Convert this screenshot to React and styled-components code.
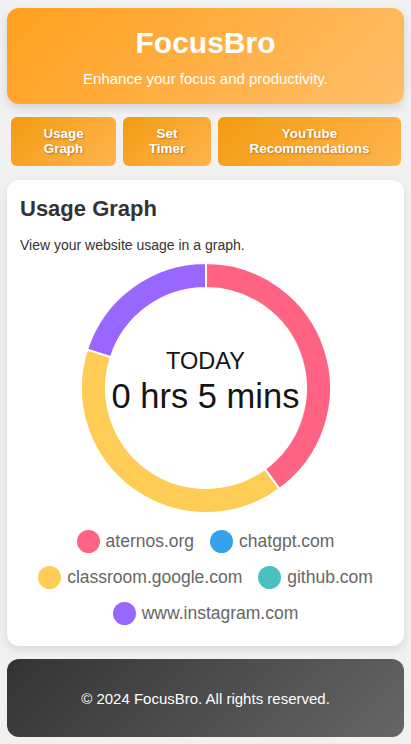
import React from "react";
import styled, { createGlobalStyle } from "styled-components";

const GlobalStyle = createGlobalStyle`
  body {
    margin: 0;
    background: #f1f1f1;
    font-family: "Liberation Sans", Arial, sans-serif;
  }
`;

const usage = [
  { site: "aternos.org", mins: 2, color: "#ff6384" },
  { site: "chatgpt.com", mins: 0, color: "#36a2eb" },
  { site: "classroom.google.com", mins: 2, color: "#ffcd56" },
  { site: "github.com", mins: 0, color: "#4bc0c0" },
  { site: "www.instagram.com", mins: 1, color: "#9966ff" },
];

const polar = (cx, cy, r, deg) => {
  const a = ((deg - 90) * Math.PI) / 180;
  return [cx + r * Math.cos(a), cy + r * Math.sin(a)];
};

const sectorPath = (cx, cy, r1, r2, start, end) => {
  const large = end - start > 180 ? 1 : 0;
  const [ox1, oy1] = polar(cx, cy, r2, start);
  const [ox2, oy2] = polar(cx, cy, r2, end);
  const [ix2, iy2] = polar(cx, cy, r1, end);
  const [ix1, iy1] = polar(cx, cy, r1, start);
  return `M${ox1} ${oy1} A${r2} ${r2} 0 ${large} 1 ${ox2} ${oy2} L${ix2} ${iy2} A${r1} ${r1} 0 ${large} 0 ${ix1} ${iy1} Z`;
};

const Donut = ({ data }) => {
  const total = data.reduce((s, d) => s + d.mins, 0);
  let angle = 0;
  return (
    <svg width="252" height="252" viewBox="0 0 252 252">
      {data
        .filter((d) => d.mins > 0)
        .map((d) => {
          const start = angle;
          angle += (d.mins / total) * 360;
          return (
            <path
              key={d.site}
              d={sectorPath(126, 126, 100, 125, start, angle)}
              fill={d.color}
              stroke="#fff"
              strokeWidth="2"
            />
          );
        })}
    </svg>
  );
};

const App = () => {
  return (
    <Page>
      <GlobalStyle />
      <Header>
        <Title>FocusBro</Title>
        <Tagline>Enhance your focus and productivity.</Tagline>
      </Header>

      <Nav>
        <NavButton>Usage<br />Graph</NavButton>
        <NavButton>Set<br />Timer</NavButton>
        <NavButton>YouTube<br />Recommendations</NavButton>
      </Nav>

      <Card>
        <CardTitle>Usage Graph</CardTitle>
        <CardText>View your website usage in a graph.</CardText>
        <ChartWrap>
          <Donut data={usage} />
          <CenterLabel>
            <Today>TODAY</Today>
            <Total>0 hrs 5 mins</Total>
          </CenterLabel>
        </ChartWrap>
        <Legend>
          {usage.map((d) => (
            <LegendItem key={d.site}>
              <Dot color={d.color} />
              {d.site}
            </LegendItem>
          ))}
        </Legend>
      </Card>

      <Footer>© 2024 FocusBro. All rights reserved.</Footer>
    </Page>
  );
};

export default App;

const Page = styled.div`
  padding: 8px 7px 6px;
  display: flex;
  flex-direction: column;
  gap: 13px;
`;

const Header = styled.header`
  background: linear-gradient(135deg, #ffa01e 0%, #ffbe69 100%);
  border-radius: 12px;
  box-shadow: 0 4px 10px rgba(0, 0, 0, 0.12);
  color: #fff;
  text-align: center;
  padding: 18px 20px 17px;
`;

const Title = styled.h1`
  margin: 0 0 10px;
  font-size: 30px;
  line-height: 34px;
  font-weight: 700;
`;

const Tagline = styled.p`
  margin: 0;
  font-size: 15px;
  line-height: 17px;
`;

const Nav = styled.nav`
  display: grid;
  grid-template-columns: 105px 88px 1fr;
  gap: 8px 7px;
  margin: 0 3px 1px 4px;
`;

const NavButton = styled.button`
  border: none;
  border-radius: 6px;
  background: linear-gradient(135deg, #f39c12 0%, #ffb44e 100%);
  color: #fff;
  font-family: "Liberation Sans", Arial, sans-serif;
  font-size: 13.4px;
  font-weight: 700;
  line-height: 15px;
  padding: 9px 6px 10px;
  text-shadow: 1px 1px 2px rgba(0, 0, 0, 0.3);
  cursor: pointer;
`;

const Card = styled.section`
  background: #fff;
  border-radius: 12px;
  box-shadow: 0 4px 10px rgba(0, 0, 0, 0.1);
  padding: 16px 13px 21px;
  display: flex;
  flex-direction: column;
`;

const CardTitle = styled.h2`
  margin: 0 0 15px;
  font-size: 22px;
  font-weight: 700;
  color: #333;
`;

const CardText = styled.p`
  margin: 0 0 10px;
  font-size: 14px;
  color: #333;
`;

const ChartWrap = styled.div`
  position: relative;
  align-self: center;
  width: 252px;
  height: 252px;
  margin-top: -1px;
`;

const CenterLabel = styled.div`
  position: absolute;
  inset: 0;
  display: flex;
  flex-direction: column;
  align-items: center;
  justify-content: center;
  color: #151515;
  padding-bottom: 13px;
`;

const Today = styled.div`
  font-size: 23.5px;
  line-height: 26px;
  margin-bottom: 3px;
`;

const Total = styled.div`
  font-size: 34.5px;
  line-height: 38px;
`;

const Legend = styled.div`
  display: flex;
  flex-wrap: wrap;
  justify-content: center;
  gap: 12px 16px;
  margin-top: 15px;
`;

const LegendItem = styled.div`
  display: flex;
  align-items: center;
  gap: 6px;
  font-size: 17.5px;
  line-height: 24px;
  color: #666;
`;

const Dot = styled.span`
  width: 23px;
  height: 23px;
  border-radius: 50%;
  background: ${(p) => p.color};
`;

const Footer = styled.footer`
  background: linear-gradient(135deg, #333 0%, #666 100%);
  border-radius: 12px;
  color: #fff;
  text-align: center;
  font-size: 15px;
  padding: 31px 20px 30px;
`;
